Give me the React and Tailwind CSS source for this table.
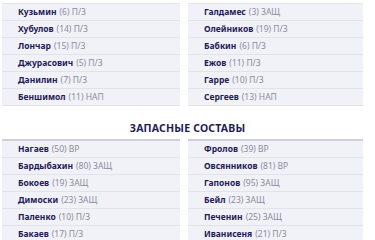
import React from "react";

const main = [
  [
    ["Кузьмин", "6", "П/З"],
    ["Хубулов", "14", "П/З"],
    ["Лончар", "15", "П/З"],
    ["Джурасович", "5", "П/З"],
    ["Данилин", "7", "П/З"],
    ["Беншимол", "11", "НАП"],
  ],
  [
    ["Галдамес", "3", "ЗАЩ"],
    ["Олейников", "19", "П/З"],
    ["Бабкин", "6", "П/З"],
    ["Ежов", "11", "П/З"],
    ["Гарре", "10", "П/З"],
    ["Сергеев", "13", "НАП"],
  ],
];

const subs = [
  [
    ["Нагаев", "50", "ВР"],
    ["Бардыбахин", "80", "ЗАЩ"],
    ["Бокоев", "19", "ЗАЩ"],
    ["Димоски", "23", "ЗАЩ"],
    ["Паленко", "10", "П/З"],
    ["Бакаев", "17", "П/З"],
  ],
  [
    ["Фролов", "39", "ВР"],
    ["Овсянников", "81", "ВР"],
    ["Гапонов", "95", "ЗАЩ"],
    ["Бейл", "23", "ЗАЩ"],
    ["Печенин", "25", "ЗАЩ"],
    ["Иванисеня", "21", "П/З"],
  ],
];

function Column({ players, thick }) {
  return (
    <div className={thick ? "border-t-2 border-[#cfcfd6]" : "border-t border-[#e4e4ec]"}>
      {players.map(([name, num, pos]) => (
        <div
          key={name}
          className="h-[17px] flex items-center pl-[16px] bg-[#f1f1f8] border-b border-[#e2e2ea] text-[8.5px] leading-none"
        >
          <span className="font-bold text-[#1f1b57]">{name}</span>
          <span className="ml-[3px] text-[#8c8c9c]">({num}) {pos}</span>
        </div>
      ))}
    </div>
  );
}

export default function App() {
  return (
    <div className="w-[375px] h-[240px] overflow-hidden bg-white" style={{ fontFamily: '"Noto Sans", sans-serif' }}>
      <div className="pt-[3px] pl-[2px] grid grid-cols-[178px_175px] gap-x-[8px]">
        <Column players={main[0]} />
        <Column players={main[1]} />
      </div>
      <div className="h-[33px] flex items-end justify-center pb-[6px]">
        <h2 className="font-bold text-[10.5px] leading-none text-[#1f1b57] tracking-[0.2px]">ЗАПАСНЫЕ СОСТАВЫ</h2>
      </div>
      <div className="pl-[2px] grid grid-cols-[178px_175px] gap-x-[8px]">
        <Column players={subs[0]} thick />
        <Column players={subs[1]} thick />
      </div>
    </div>
  );
}
